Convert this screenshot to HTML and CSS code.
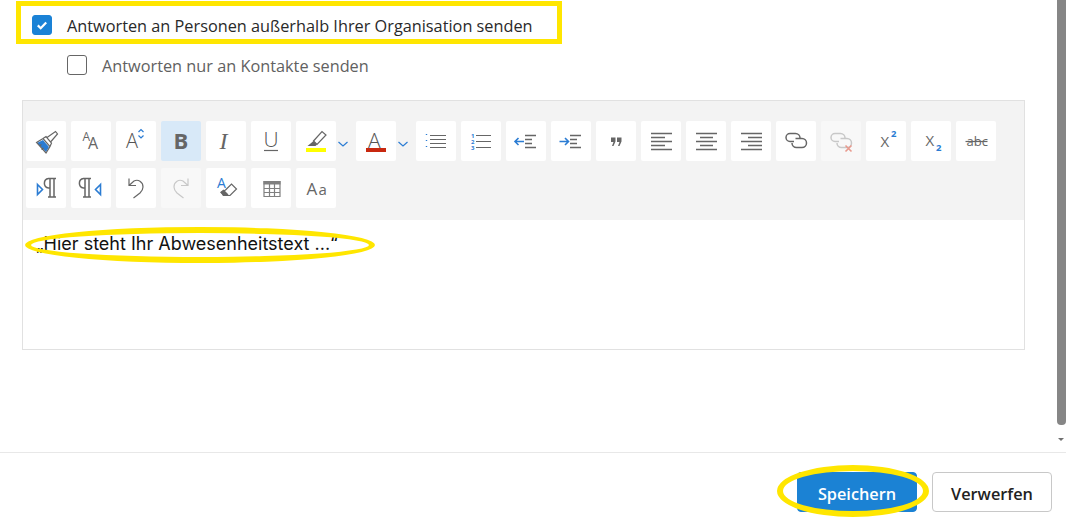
FILE: index.html
```html
<!doctype html>
<html lang="de">
  <head>
    <meta charset="utf-8">
    <title>Automatische Antworten</title>
    <link rel="stylesheet" href="styles.css">
  </head>
  <body>
    <div class="page">
      <div class="scroll-area">
        <div class="content">
          <label class="option">
            <span class="check checked">
              <svg width="20" height="20" viewBox="0 0 20 20"><path d="M5.800 10.400l2.900 2.800 5.500-5.800" fill="none" stroke="#fff" stroke-width="2.200"/></svg>
            </span>
            <span class="option-text">Antworten an Personen außerhalb Ihrer Organisation senden</span>
          </label>
          <label class="option sub">
            <span class="check"></span>
            <span class="option-text">Antworten nur an Kontakte senden</span>
          </label>

          <div class="editor">
            <div class="toolbar">
              <div class="tool-row">
                <button class="tool"><svg viewBox="0 0 40 40"><path class="blue-fill" d="M11 22l6-3 6 7-3 5z"/><path class="line" d="M10.500 21.500l6.500-4 7 8-4 6.500zM17 17.500l3-2 5.500 6.500-1.500 3.500M21 16.500l8.500-6 2 2.500-6.500 7.500M13 25l2.500-1.500M15.500 28.500l2-1.500"/></svg></button>
                <button class="tool"><svg viewBox="0 0 40 40"><text class="glyph" x="11.500" y="20" font-size="12">A</text><text class="glyph" x="17" y="27.500" font-size="16">A</text></svg></button>
                <button class="tool"><svg viewBox="0 0 40 40"><text class="glyph thin" x="10" y="27" font-size="20">A</text><path class="line-blue" d="M22.500 11l2.500-2.500 2.500 2.500M22.500 14.500l2.500 2.500 2.500-2.500"/></svg></button>
                <button class="tool active"><svg viewBox="0 0 40 40"><text class="glyph bold" x="12.500" y="27.500" font-size="22">B</text></svg></button>
                <button class="tool"><svg viewBox="0 0 40 40"><text class="glyph serif" x="13.500" y="27.500" font-size="24">I</text></svg></button>
                <button class="tool"><svg viewBox="0 0 40 40"><text class="glyph thin" x="12.500" y="26" font-size="21">U</text><path class="line" d="M13 29.500h14"/></svg></button>
                <button class="tool"><svg viewBox="0 0 40 40"><path class="line" d="M17.500 20l8.500-9.500 4 3.500-9 9.500z"/><path class="gray-fill" d="M17.500 20l3.500 3.500-1.500 1.500h-8z"/><rect class="yellow" x="10" y="27" width="20" height="4"/></svg></button>
                <button class="caret"><svg width="15" height="40" viewBox="0 0 15 40"><path class="line-blue" d="M2.500 21l4.500 4 4.500-4"/></svg></button>
                <button class="tool"><svg viewBox="0 0 40 40"><text class="glyph thin" x="12" y="27" font-size="21">A</text><rect class="red" x="10" y="27" width="20" height="4"/></svg></button>
                <button class="caret"><svg width="15" height="40" viewBox="0 0 15 40"><path class="line-blue" d="M2.500 21l4.500 4 4.500-4"/></svg></button>
                <button class="tool"><svg viewBox="0 0 40 40"><path class="dots" d="M10.500 13v2M10.500 19v2M10.500 25v2"/><path class="line" d="M14 14.500h16M14 18.500h16M14 22.500h16M14 26.500h16"/></svg></button>
                <button class="tool"><svg viewBox="0 0 40 40"><text class="num" x="10" y="16.500">1</text><text class="num" x="10" y="22.500">2</text><text class="num" x="10" y="28.500">3</text><path class="line" d="M15 14.500h15M15 20.500h15M15 26.500h15"/></svg></button>
                <button class="tool"><svg viewBox="0 0 40 40"><path class="line-blue wide" d="M18 20.500h-9M12.500 17l-3.500 3.500 3.500 3.500"/><path class="line wide" d="M19 14.500h11M19 18.500h7M19 22.500h7M19 26.500h11"/></svg></button>
                <button class="tool"><svg viewBox="0 0 40 40"><path class="line-blue wide" d="M8.500 20.500h9M14 17l3.500 3.500-3.500 3.500"/><path class="line wide" d="M19 14.500h11M19 18.500h7M19 22.500h7M19 26.500h11"/></svg></button>
                <button class="tool"><svg viewBox="0 0 40 40"><path class="gray-fill" d="M15 16.500h4.500v4l-2 4.500h-1.500l1.500-4h-2.500zM21 16.500h4.500v4l-2 4.500h-1.500l1.500-4h-2.500z"/></svg></button>
                <button class="tool"><svg viewBox="0 0 40 40"><path class="line wide" d="M10 12.500h21M10 16.500h14M10 20.500h21M10 24.500h14M10 28.500h21"/></svg></button>
                <button class="tool"><svg viewBox="0 0 40 40"><path class="line wide" d="M10 12.500h21M14 16.500h13M10 20.500h21M14 24.500h13M10 28.500h21"/></svg></button>
                <button class="tool"><svg viewBox="0 0 40 40"><path class="line wide" d="M10 12.500h21M17 16.500h14M10 20.500h21M17 24.500h14M10 28.500h21"/></svg></button>
                <button class="tool"><svg viewBox="0 0 40 40"><path class="line wide" d="M18 20.500h-4a4 4 0 0 1 0-8h5.500a4.500 4.500 0 0 1 4.500 4.500"/><path class="line wide" d="M19.500 17.500h6.500a4.500 4.500 0 0 1 0 9h-5.500a4.500 4.500 0 0 1-4.500-4.500"/></svg></button>
                <button class="tool off"><svg viewBox="0 0 40 40"><path class="line wide faint" d="M18 20.500h-4a4 4 0 0 1 0-8h5.500a4.500 4.500 0 0 1 4.500 4.500"/><path class="line wide faint" d="M19.500 17.500h6.500a4.500 4.500 0 0 1 0 9h-5.500a4.500 4.500 0 0 1-4.500-4.500"/><path class="line-red" d="M24.500 24.500l6 6M30.500 24.500l-6 6"/></svg></button>
                <button class="tool"><svg viewBox="0 0 40 40"><text class="glyph" x="14.500" y="26" font-size="15">X</text><text class="index" x="25" y="16">2</text></svg></button>
                <button class="tool"><svg viewBox="0 0 40 40"><text class="glyph" x="14.500" y="25" font-size="15">X</text><text class="index" x="25" y="30">2</text></svg></button>
                <button class="tool"><svg viewBox="0 0 40 40"><text class="glyph" x="10.500" y="24.500" font-size="13">abc</text><path class="line" d="M9.500 20.500h22"/></svg></button>
              </div>
              <div class="tool-row">
                <button class="tool"><svg viewBox="0 0 40 40"><path class="line-blue wide" d="M11.500 16.500l5 5-5 5z"/><path class="line wide" d="M24 29v-18.500h6M28 10.500v18.500M24 20h-1.500a4.800 4.800 0 0 1 0-9.500h1.500M22 29h8"/></svg></button>
                <button class="tool"><svg viewBox="0 0 40 40"><path class="line wide" d="M14 29v-18.500h6M18 10.500v18.500M14 20h-1.500a4.800 4.800 0 0 1 0-9.500h1.500M12 29h8"/><path class="line-blue wide" d="M29.500 16.500l-5 5 5 5z"/></svg></button>
                <button class="tool"><svg viewBox="0 0 40 40"><path class="line" d="M13 10.500v7h7M13 17.500l5-4.500c4-2 9 .5 9 6 0 3-1.500 4.500-3 6l-6.500 5"/></svg></button>
                <button class="tool off"><svg viewBox="0 0 40 40"><path class="line faint" d="M27 10.500v7h-7M27 17.500l-5-4.500c-4-2-9 .5-9 6 0 3 1.500 4.500 3 6l6.500 5"/></svg></button>
                <button class="tool"><svg viewBox="0 0 40 40"><text class="glyph blue-text" x="11" y="20" font-size="14">A</text><path class="line" d="M19.500 22l6-6 5 5-6.500 6.500h-6l-3-3z"/><path class="gray-fill" d="M14.500 24l3-2.500 5 5-1.500 1.500h-4z"/></svg></button>
                <button class="tool"><svg viewBox="0 0 40 40"><rect class="gray-fill soft" x="12.500" y="13" width="17" height="3.500"/><path class="line soft" d="M13 13.500h16v15h-16zM13 20.500h16M13 24.500h16M18.500 16v12.500M23.500 16v12.500"/></svg></button>
                <button class="tool"><svg viewBox="0 0 40 40"><text class="glyph" x="10.500" y="27" font-size="17">A</text><text class="glyph" x="22.500" y="27" font-size="15">a</text></svg></button>
              </div>
            </div>
            <div class="editor-body"><span class="reply-text">„Hier steht Ihr Abwesenheitstext ...“</span></div>
          </div>
        </div>
        <div class="scrollbar">
          <div class="thumb"></div>
          <div class="arrow"></div>
        </div>
      </div>

      <div class="footer">
        <button class="btn primary">Speichern</button>
        <button class="btn">Verwerfen</button>
      </div>
    </div>

    <div class="mark mark-option"></div>
    <div class="mark mark-text"></div>
    <div class="mark mark-save"></div>
  </body>
</html>
```

FILE: styles.css
```css
body {
  font-family: "Open Sans", "Noto Sans", sans-serif;
  margin: 0;
  background: #fff;
  overflow: hidden;
}

.page {
  display: flex;
  flex-direction: column;
  height: 529px;
}

.scroll-area {
  display: flex;
  height: 452px;
}

.content {
  flex: 1;
  padding: 15px 0 0 22px;
}

/* checkboxes */
.option {
  display: flex;
  align-items: center;
  gap: 15px;
  height: 20px;
  margin-left: 10px;
  font-size: 16.3px;
  color: #292929;
}

.option.sub {
  margin-top: 20px;
  margin-left: 45px;
  color: #616161;
}

.option-text { padding-top: 1px; }

.check {
  width: 20px;
  height: 20px;
  box-sizing: border-box;
  border: 1px solid #666;
  border-radius: 3px;
}

.check svg { display: block; margin: -1px; }

.check.checked {
  background: #1a82d6;
  border-color: #1a82d6;
}

/* editor */
.editor {
  width: 1003px;
  height: 250px;
  box-sizing: border-box;
  margin-top: 25px;
  border: 1px solid #e1e1e1;
}

.toolbar {
  box-sizing: border-box;
  height: 119px;
  padding: 20px 3px 0;
  background: #f3f3f3;
}

.tool-row {
  display: flex;
  gap: 5px;
  margin-bottom: 7px;
}

.tool {
  width: 40px;
  height: 40px;
  padding: 0;
  border: 0;
  border-radius: 2px;
  background: #fff;
}

.tool svg { display: block; width: 40px; height: 40px; }

.tool.active { background: #d8e9f8; }
.tool.off { background: #f8f8f8; }

.caret {
  width: 15px;
  height: 40px;
  margin-left: -5px;
  padding: 0;
  border: 0;
  background: none;
}

.caret svg { display: block; }

.line { fill: none; stroke: #666; stroke-width: 1.2; }
.line.wide { stroke-width: 1.5; }
.line.faint { stroke: #c8c8c8; }
.line.soft { stroke: #808080; }
.line-blue { fill: none; stroke: #2b7cd3; stroke-width: 1.2; }
.line-blue.wide { stroke-width: 1.6; }
.line-red { fill: none; stroke: #e89a8e; stroke-width: 1.6; }
.dots { fill: none; stroke: #2b7cd3; stroke-width: 1.4; stroke-dasharray: 1 1; }
.blue-fill { fill: #2b7cd3; }
.gray-fill { fill: #666; }
.gray-fill.soft { fill: #808080; }
.yellow { fill: #ffff00; }
.red { fill: #c8280f; }

.glyph { font-family: "Open Sans", sans-serif; fill: #666; }
.glyph.thin { font-weight: 300; fill: #555; }
.glyph.bold { font-weight: 700; }
.glyph.serif { font-family: "Liberation Serif", serif; font-style: italic; }
.glyph.blue-text { fill: #2b7cd3; }
.num { font: 700 6px "Open Sans", sans-serif; fill: #2b7cd3; }
.index { font: 700 9.500px "Open Sans", sans-serif; fill: #2b7cd3; }

.editor-body {
  padding: 13px 0 0 13px;
  font-family: Inter, sans-serif;
  font-size: 18px;
  line-height: 22px;
  color: #111;
}

/* fake scrollbar */
.scrollbar {
  position: relative;
  width: 9px;
}

.thumb {
  height: 425px;
  background: #868686;
  border-radius: 0 0 4px 4px;
}

.arrow {
  width: 0;
  margin: 13px 0 0 1px;
  border-top: 3px solid #707070;
  border-left: 3px solid transparent;
  border-right: 3px solid transparent;
}

/* footer */
.footer {
  flex: 1;
  display: flex;
  justify-content: flex-end;
  gap: 15px;
  padding: 19px 14px 0 0;
  border-top: 1px solid #e8e8e8;
}

.btn {
  width: 120px;
  height: 40px;
  box-sizing: border-box;
  padding: 3px 0 0;
  border: 1px solid #c8c8c8;
  border-radius: 4px;
  background: #fff;
  color: #222;
  font-family: "Open Sans", sans-serif;
  font-size: 16.300px;
  font-weight: 600;
}

.btn.primary {
  background: #1b82d4;
  border-color: #1b82d4;
  color: #fff;
}

/* yellow annotations drawn over the screenshot */
.mark {
  position: absolute;
  box-sizing: border-box;
  border: 5px solid #ffe600;
}

.mark-option {
  left: 16px;
  top: 1px;
  width: 546px;
  height: 43px;
}

.mark-text {
  left: 25px;
  top: 227px;
  width: 350px;
  height: 36px;
  border-width: 6px;
  border-radius: 50%;
}

.mark-save {
  left: 777px;
  top: 465px;
  width: 152px;
  height: 52px;
  border-width: 6px;
  border-radius: 50%;
}
```
